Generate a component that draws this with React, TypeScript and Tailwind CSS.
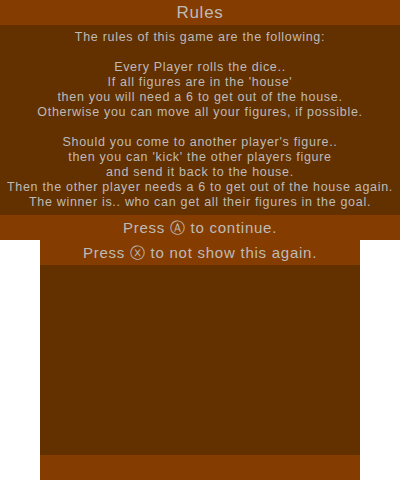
const rules = [
	'The rules of this game are the following:',
	'',
	'Every Player rolls the dice..',
	"If all figures are in the 'house'",
	'then you will need a 6 to get out of the house.',
	'Otherwise you can move all your figures, if possible.',
	'',
	"Should you come to another player's figure..",
	"then you can 'kick' the other players figure",
	'and send it back to the house.',
	'Then the other player needs a 6 to get out of the house again.',
	'The winner is.. who can get all their figures in the goal.',
];

export default function App() {
	return (
		<div className="w-[400px] h-[480px] bg-white flex flex-col items-center font-['Liberation_Sans',sans-serif] text-[#bdbbb8] tracking-[0.75px]">
			{/* top screen */}
			<div className="w-[400px] h-[240px] flex flex-col">
				<div className="h-[25px] bg-[#853c00] flex items-center justify-center text-[17px] leading-none">
					Rules
				</div>
				<div className="h-[190px] bg-[#633000] flex flex-col items-center pt-[5px] text-[12.5px] leading-[15px] tracking-[0.7px]">
					{rules.map((line, i) => (
						<div key={i} className="h-[15px] whitespace-nowrap">
							{line}
						</div>
					))}
				</div>
				<div className="h-[25px] bg-[#853c00] flex items-center justify-center text-[15px] leading-none">
					Press Ⓐ to continue.
				</div>
			</div>
			{/* bottom screen */}
			<div className="w-[320px] h-[240px] flex flex-col">
				<div className="h-[25px] bg-[#853c00] flex items-center justify-center text-[15px] leading-none">
					Press ⓧ to not show this again.
				</div>
				<div className="flex-1 bg-[#633000]" />
				<div className="h-[25px] bg-[#853c00]" />
			</div>
		</div>
	);
}
